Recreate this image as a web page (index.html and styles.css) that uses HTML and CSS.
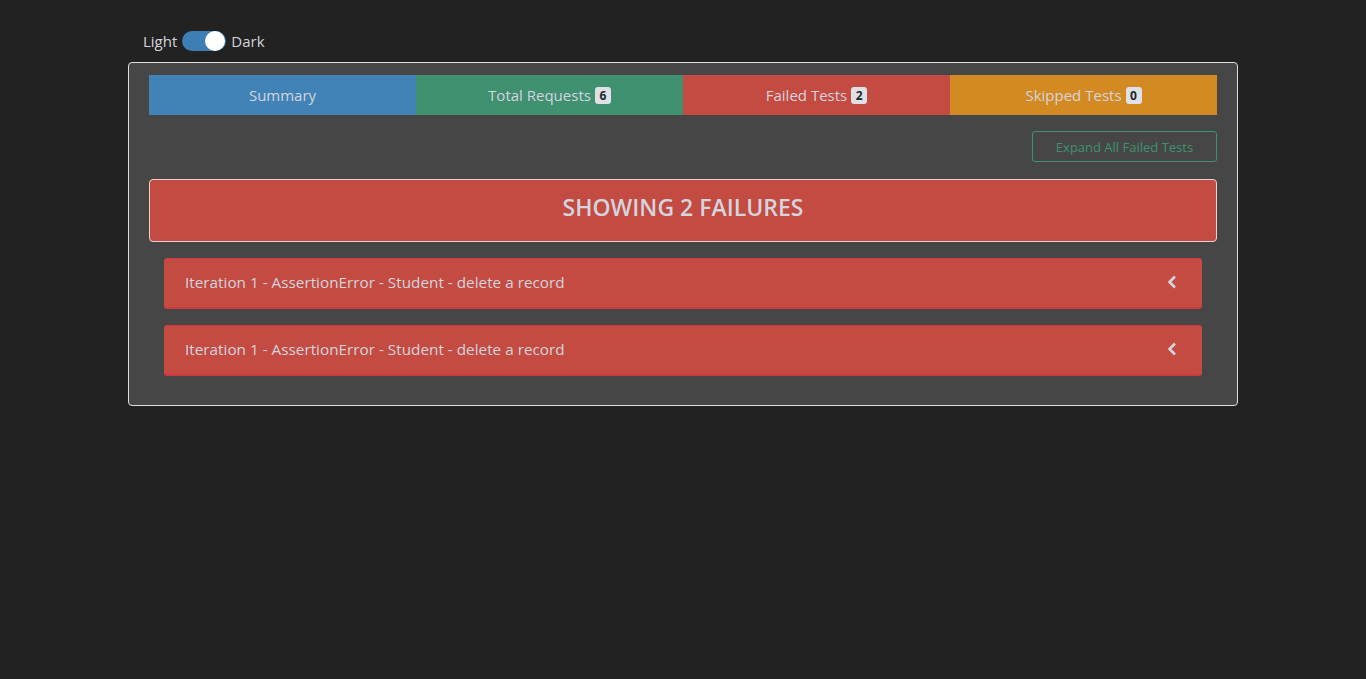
FILE: index.html
```html
<!DOCTYPE html>
<html>
<head>
<meta charset="utf-8">
<link rel="stylesheet" href="styles.css">
</head>
<body>
<div class="container">
  <div class="theme-toggle">
    <span class="lbl">Light</span>
    <span class="switch"><span class="knob"></span></span>
    <span class="lbl">Dark</span>
  </div>
  <div class="card">
    <div class="tabs">
      <div class="tab tab-summary">Summary</div>
      <div class="tab tab-total">Total Requests <span class="badge">6</span></div>
      <div class="tab tab-failed">Failed Tests <span class="badge">2</span></div>
      <div class="tab tab-skipped">Skipped Tests <span class="badge">0</span></div>
    </div>
    <div class="actions">
      <button class="btn-expand">Expand All Failed Tests</button>
    </div>
    <div class="showing">SHOWING 2 FAILURES</div>
    <div class="failures">
      <div class="failure">
        <span>Iteration 1 - AssertionError - Student - delete a record</span>
        <svg class="chev" width="10" height="14" viewBox="0 0 10 14"><path d="M8 1.5 L2.5 7 L8 12.5" fill="none" stroke="#d4d4dc" stroke-width="2.6"/></svg>
      </div>
      <div class="failure">
        <span>Iteration 1 - AssertionError - Student - delete a record</span>
        <svg class="chev" width="10" height="14" viewBox="0 0 10 14"><path d="M8 1.5 L2.5 7 L8 12.5" fill="none" stroke="#d4d4dc" stroke-width="2.6"/></svg>
      </div>
    </div>
  </div>
</div>
</body>
</html>
```

FILE: styles.css
```css
* { box-sizing: border-box; }
html, body { margin: 0; padding: 0; }
body {
  background: #222222;
  font-family: "Open Sans", "Noto Sans", sans-serif;
  font-size: 15px;
  color: #d4d4dc;
  height: 679px;
}
.container {
  width: 1110px;
  margin: 0 auto;
  padding-top: 29px;
}
.theme-toggle {
  display: flex;
  align-items: center;
  gap: 4px;
  padding-left: 15px;
  height: 24px;
  margin-bottom: 9px;
}
.lbl { font-size: 15px; color: #d4d4dc; }
.switch {
  width: 44px;
  height: 20px;
  border-radius: 10px;
  background: #3d7fb5;
  position: relative;
  display: inline-block;
  margin: 0 1px;
}
.knob {
  position: absolute;
  right: 1px;
  top: 0;
  width: 20px;
  height: 20px;
  border-radius: 50%;
  background: #ffffff;
}
.card {
  background: #464646;
  border: 1px solid #dedede;
  border-radius: 4px;
  padding: 12px 20px 29px;
}
.tabs {
  display: grid;
  grid-template-columns: repeat(4, 1fr);
  height: 40px;
}
.tab {
  display: flex;
  align-items: center;
  justify-content: center;
  gap: 4px;
  font-size: 15px;
  color: #d4d4dc;
}
.tab-summary { background: #4183b6; }
.tab-total { background: #3f9170; }
.tab-failed { background: #c34b41; }
.tab-skipped { background: #d38a23; }
.badge {
  background: #dfe1e6;
  color: #212529;
  font-size: 12px;
  font-weight: 700;
  border-radius: 3px;
  padding: 2px 4px;
  min-width: 16px;
  text-align: center;
  line-height: 13px;
}
.actions {
  display: flex;
  justify-content: flex-end;
  margin-top: 16px;
}
.btn-expand {
  background: transparent;
  border: 1px solid #3f9170;
  color: #3f9170;
  font-family: inherit;
  font-size: 13px;
  height: 31px;
  width: 185px;
  border-radius: 3px;
  padding: 0 12px;
}
.showing {
  margin-top: 17px;
  height: 63px;
  background: #c34b41;
  border: 1px solid #e6d2d2;
  border-radius: 4px;
  display: flex;
  align-items: center;
  justify-content: center;
  padding-bottom: 8px;
  font-size: 23px;
  font-weight: 600;
  color: #d4d4de;
}
.failures {
  padding: 16px 15px 0;
  display: flex;
  flex-direction: column;
  gap: 16px;
}
.failure {
  height: 51px;
  background: #c34b41;
  border-top: 1px solid #d0393f;
  border-bottom: 2px solid #d0393f;
  border-radius: 3px;
  display: flex;
  align-items: center;
  justify-content: space-between;
  padding: 0 25px 2px 21px;
  font-size: 15.3px;
  color: #d4d4dc;
}
.chev { margin-top: 0; }
```
